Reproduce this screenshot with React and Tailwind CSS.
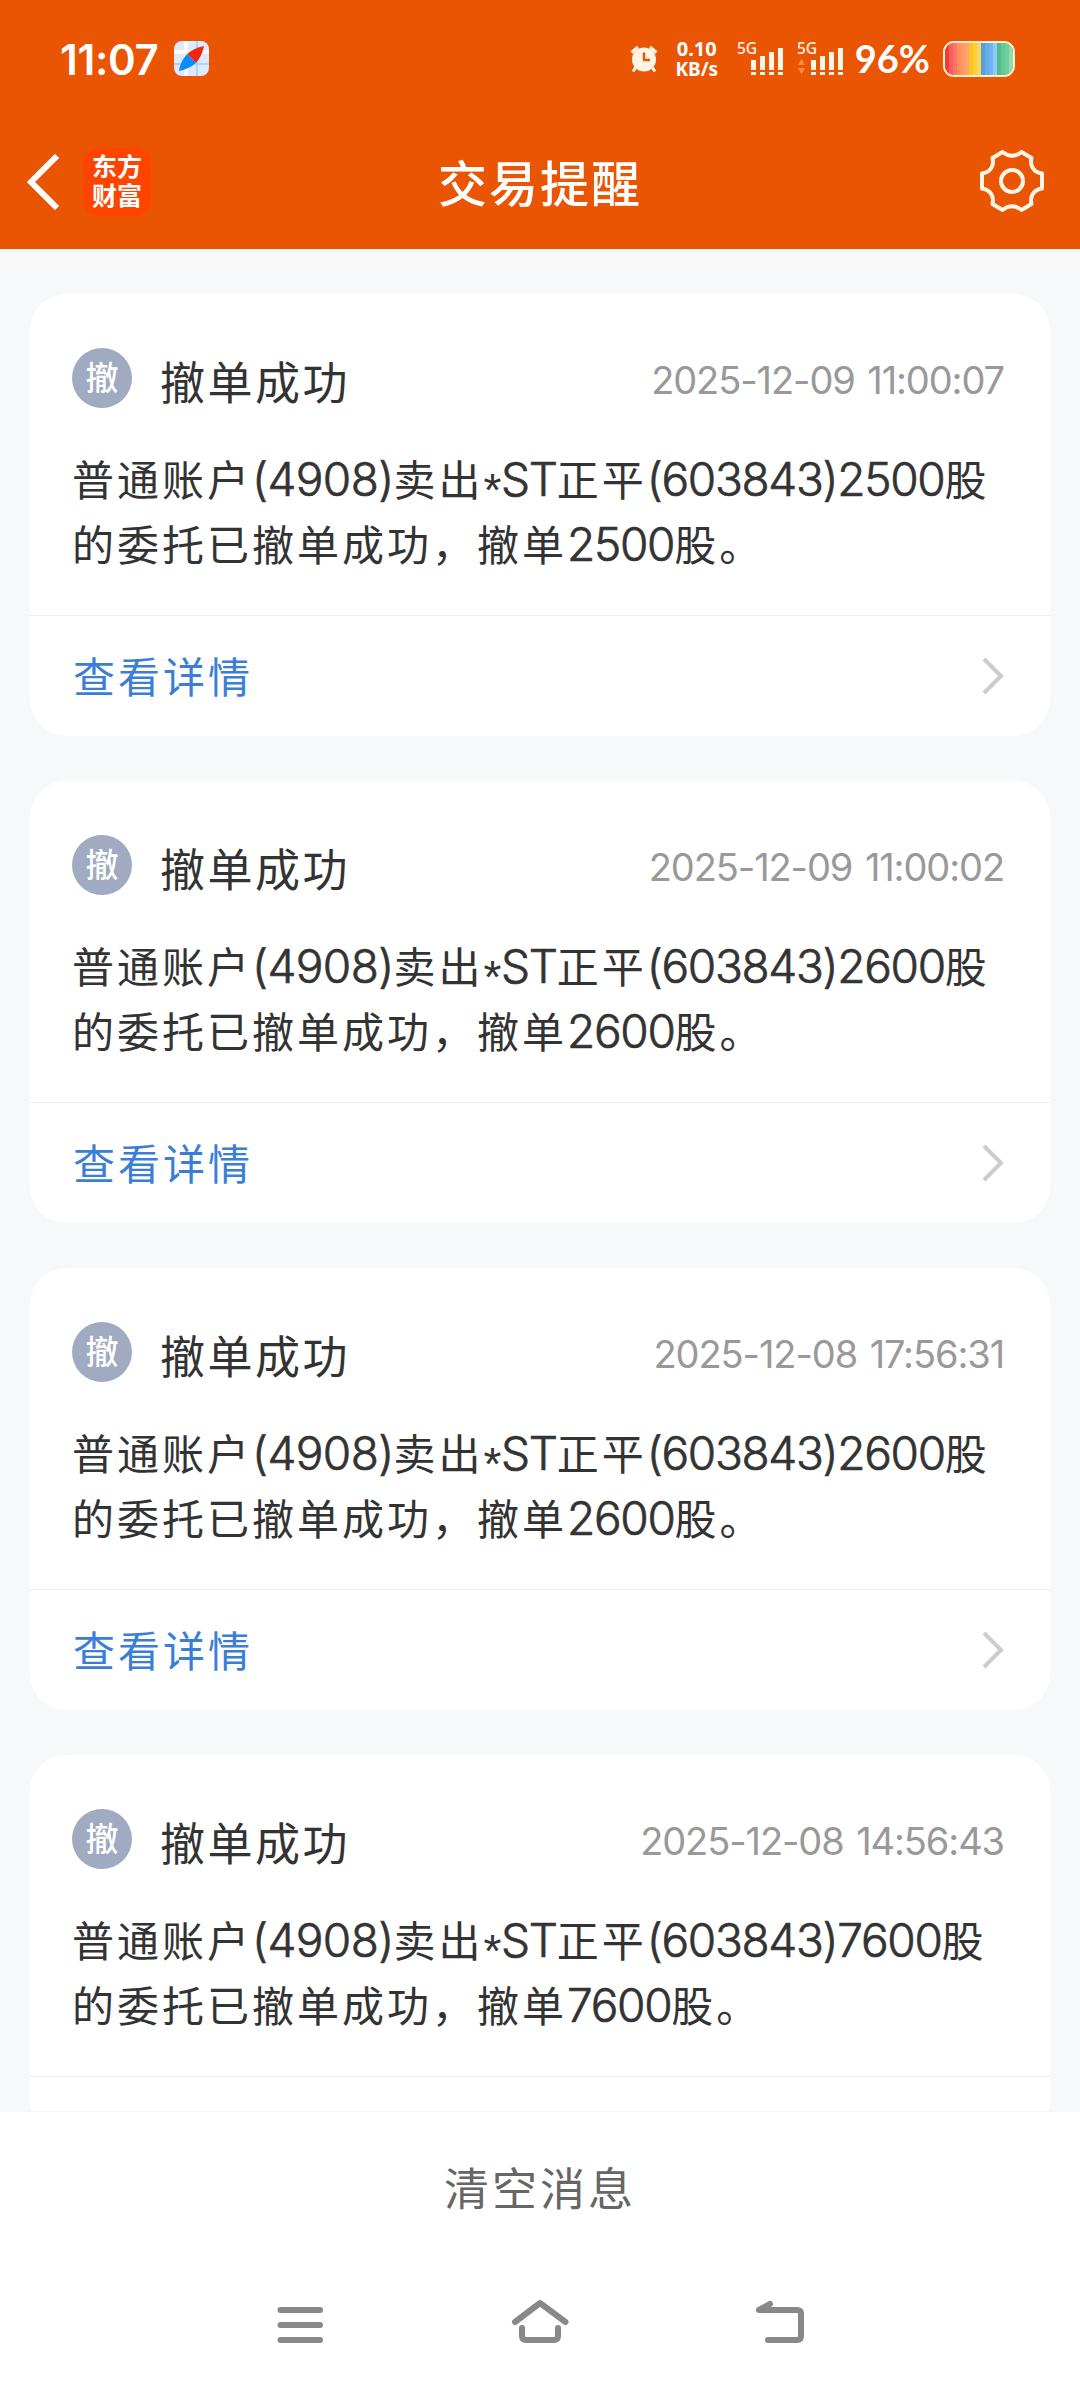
import { Fragment } from "react";
import clsx from "clsx";

const MESSAGES = [
    { id: 1, time: "2025-12-09 11:00:07", qty: "2500" },
    { id: 2, time: "2025-12-09 11:00:02", qty: "2600" },
    { id: 3, time: "2025-12-08 17:56:31", qty: "2600" },
    { id: 4, time: "2025-12-08 14:56:43", qty: "7600" },
];

const BATTERY = ["#f13b3b", "#ff5b5f", "#ff7468", "#ff8f5c", "#ff9a66", "#ffa46f", "#ffc21f", "#ffcd3a", "#f5da6a", "#5a9fd6", "#63aeea", "#6db5f0", "#8fcbf8", "#55b98a", "#62cb95", "#6fd09c", "#93dcb0"];

// 数字与西文用另一套字号
function Num({ wide, children }) {
    return (
        <span className={clsx("font-['Inter'] font-light text-[46px] leading-none [-webkit-text-stroke:0.7px_#333]", wide ? "tracking-[-0.6px]" : "tracking-[-1.3px]")}>
            {children}
        </span>
    );
}

function Signal({ arrows }) {
    return (
        <svg width="48" height="44" viewBox="0 -5 48 44" fill="#fff5e6">
            <text x="0" y="12" fontSize="15.500" fontWeight="500" fontFamily="Noto Sans">5G</text>
            {[0, 1, 2, 3].map((i) => (
                <Fragment key={i}>
                    <rect x={14 + i * 9} y={18 - i * 4} width="5" height={10 + i * 4} />
                    <rect x={14 + i * 9} y="30" width="5" height="3" />
                </Fragment>
            ))}
            {arrows && <path d="M4.500 17l3.500 6H1zM4.500 32l-3.500-6h7z" fill="#ff8a4a" />}
        </svg>
    );
}

function StatusBar() {
    return (
        <div className="h-[117px] flex items-center pl-[60px] pr-[65px] text-white">
            <span className="w-[100px] pt-[2px] font-['Inter'] font-semibold text-[42px] tracking-[-0.3px]">11:07</span>
            <svg className="ml-[14px]" width="35" height="35" viewBox="0 0 35 35">
                <rect width="35" height="35" rx="8" fill="#dfe9fb" />
                <path d="M12 0v35M0 11h35" stroke="#fff" strokeWidth="3.500" />
                <path d="M23 0v35M0 23h35" stroke="#a5d8fa" strokeWidth="2" />
                <path d="M30 5Q20 7 13 13l9 9Q28 15 30 5z" fill="#f0260f" />
                <path d="M5 30q1-9 8-17l9 9Q15 28 5 30z" fill="#0a8cff" />
            </svg>
            <div className="flex-1" />
            <svg width="28" height="28" viewBox="0 0 28 28" fill="#fff5e6">
                <circle cx="14" cy="14.500" r="12" />
                <path d="M1.500 7.500L8 2M26.500 7.500L20 2M6 22l-3 4.500M22 22l3 4.500" stroke="#fff5e6" strokeWidth="3" />
                <path d="M14 7.500V15h6" stroke="#ea5504" strokeWidth="2.500" fill="none" />
            </svg>
            <div className="ml-[17px] w-[44px] text-center font-['Noto_Sans'] font-bold leading-[21px]">
                <div className="text-[20px]">0.10</div>
                <div className="text-[19px]">KB/s</div>
            </div>
            <div className="ml-[18px] flex gap-[12px]">
                <Signal />
                <Signal arrows />
            </div>
            <span className="ml-[10px] font-['Lato'] font-bold text-[38px]">96%</span>
            <div className="ml-[13px] w-[72px] h-[36px] rounded-[11px] border-2 border-[#fff0cf] flex overflow-hidden">
                {BATTERY.map((c) => <div key={c} className="flex-1" style={{ background: c }} />)}
            </div>
        </div>
    );
}

function Header() {
    return (
        <div className="h-[129px] flex items-center text-white">
            <div className="flex-1 flex items-center">
                <svg className="ml-[26px]" width="34" height="56" viewBox="0 0 34 56" fill="none" stroke="#fff" strokeWidth="6">
                    <path d="M31 2L5 28l26 26" />
                </svg>
                <div className="ml-[23px] w-[68px] h-[68px] pb-[3px] rounded-[15px] bg-[#ff4400] flex flex-col items-center justify-center font-bold text-[25px] leading-[29px]">
                    <span>东方</span>
                    <span>财富</span>
                </div>
            </div>
            <h1 className="pb-[2px] text-[49px] tracking-[2px] font-medium">交易提醒</h1>
            <div className="flex-1 flex justify-end">
                <svg className="mr-[36px] mb-[2px]" width="64" height="62" viewBox="0 0 64 62" fill="none" stroke="#fff5e6" strokeWidth="4" strokeLinejoin="round">
                    <circle cx="32" cy="31" r="11" />
                    <path d="M22.500 2Q32 9.500 41.500 2L51.500 8C49.500 16 54 22.500 62 23.500V38.500C54 39.500 49.500 46 51.500 54L41.500 60Q32 52.500 22.500 60L12.500 54C14.500 46 10 39.500 2 38.500V23.500C10 22.500 14.500 16 12.500 8Z" />
                </svg>
            </div>
        </div>
    );
}

function MessageCard({ msg }) {
    return (
        <div className="h-[442px] shrink-0 bg-white rounded-[36px] overflow-hidden text-[#333]">
            <div className="h-[321px] px-[42px] pt-[54px]">
                <div className="flex items-center h-[60px]">
                    <span className="w-[60px] h-[60px] pb-[2px] rounded-full bg-[#a0aac1] text-white text-[33px] font-medium flex items-center justify-center">撤</span>
                    <span className="ml-[28px] pt-[5px] text-[45px] tracking-[2.500px]">撤单成功</span>
                    <span className="ml-auto mr-[4px] pt-[4px] font-['Inter'] text-[38px] tracking-[-1.1px] [word-spacing:3px] text-[#999]">{msg.time}</span>
                </div>
                <p className="mt-[37px] text-[42px] tracking-[3px] leading-[65px] whitespace-nowrap">
                    普通账户<Num wide>(4908)</Num>卖出<span className="relative top-[10px] font-['Liberation_Sans'] text-[46px] leading-none tracking-[-0.5px]">*</span><Num>ST</Num>正平<Num>(603843){msg.qty}</Num>股<br />
                    的委托已撤单成功，撤单<Num>{msg.qty}</Num>股。
                </p>
            </div>
            <div className="h-[121px] border-t border-[#eee] flex items-center pl-[43px] pr-[46px]">
                <span className="pb-[3px] text-[42px] tracking-[3px] text-[#3a7fd5]">查看详情</span>
                <svg className="ml-auto" width="22" height="38" viewBox="0 0 22 38" fill="none" stroke="#ccc" strokeWidth="4">
                    <path d="M2 2l17 17L2 36" />
                </svg>
            </div>
        </div>
    );
}

export default function App() {
    return (
        <div className="w-[1080px] h-[2388px] flex flex-col overflow-hidden bg-[#f7f8fa] font-['Noto_Sans_CJK_SC',sans-serif]">
            <div className="bg-[#ea5504] h-[249px] shrink-0">
                <StatusBar />
                <Header />
            </div>

            {/* 消息列表 */}
            <div className="h-[1862px] shrink-0 overflow-hidden px-[30px] pt-[45px] flex flex-col gap-[45px]">
                {MESSAGES.map((m) => <MessageCard key={m.id} msg={m} />)}
            </div>

            <div className="h-[277px] bg-white border-t border-[#f7f7f7]">
                <div className="h-[154px] pb-[5px] flex items-center justify-center text-[45px] tracking-[3px] text-[#666]">清空消息</div>
                {/* 系统导航栏 */}
                <svg width="1080" height="120" viewBox="0 2266 1080 120" fill="none" stroke="#888" strokeWidth="6" strokeLinecap="round" strokeLinejoin="round">
                    <path d="M280.500 2310h39.500M280.500 2325h39.500M280.500 2340h39.500" />
                    <path d="M515 2322l25-19 25.500 19" />
                    <path d="M522 2328v8q0 4 4 4h28q4 0 4-4v-8" />
                    <path d="M770 2304l-11 6h38q4 0 4 4v22q0 4-4 4h-29" />
                </svg>
            </div>
        </div>
    );
}
